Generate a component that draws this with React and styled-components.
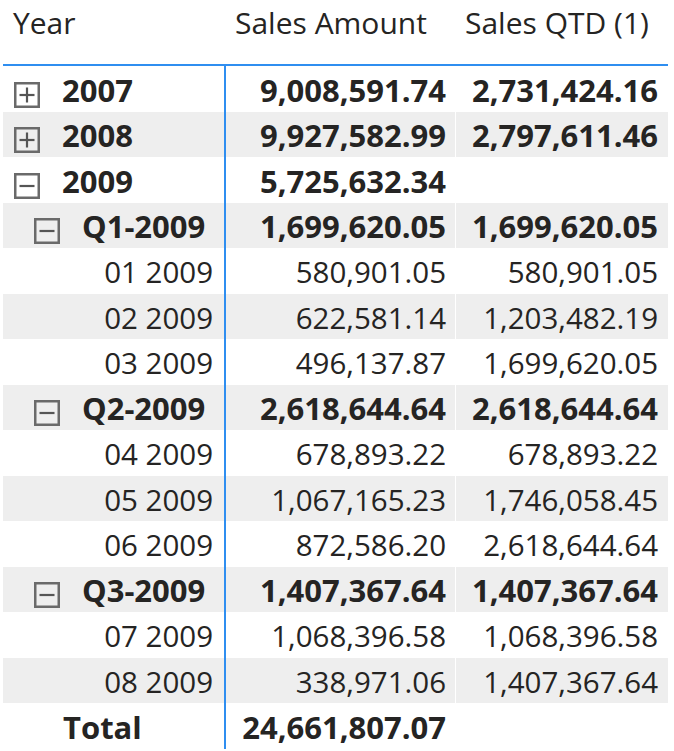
import React from "react";
import styled, { createGlobalStyle } from "styled-components";

const GlobalStyle = createGlobalStyle`
  html, body { margin: 0; padding: 0; background: #ffffff; }
  body { font-family: "Open Sans", "Noto Sans", sans-serif; color: #252423; }
`;

const BLUE = "#2f8ef0";
const COLS = "221px 231px 213px";

const Page = styled.div`
  padding-left: 3px;
  width: 665px;
`;

const HeaderRow = styled.div`
  display: grid;
  grid-template-columns: ${COLS};
  height: 64px;
  border-bottom: 2px solid ${BLUE};
`;

const HeaderCell = styled.div`
  font-size: 30px;
  font-weight: 400;
  line-height: 45px;
  padding-left: ${(p) => p.$pad}px;
  white-space: nowrap;
`;

const Row = styled.div`
  display: grid;
  grid-template-columns: ${COLS};
  height: 45.5px;
  background: ${(p) => (p.$shaded ? "#eeeeee" : "#ffffff")};
  font-size: ${(p) => (p.$bold ? 31 : 29.5)}px;
  font-weight: ${(p) => (p.$bold ? 700 : 400)};
`;

const LabelCell = styled.div`
  display: flex;
  align-items: center;
  justify-content: ${(p) => (p.$right ? "flex-end" : "flex-start")};
  padding: 2px 11px 0 ${(p) => p.$indent}px;
  white-space: nowrap;
`;

const NumCell = styled.div`
  display: flex;
  align-items: center;
  justify-content: flex-end;
  padding: 2px ${(p) => p.$padRight}px 0 0;
  border-left: ${(p) => p.$divider};
  white-space: nowrap;
`;

const Text = styled.span`
  line-height: normal;
`;

const ToggleBox = styled.svg`
  flex: none;
  width: 26px;
  height: 26px;
  margin-top: 10px;
  margin-right: 22px;
`;

function Toggle({ expanded }) {
  return (
    <ToggleBox viewBox="0 0 26 26">
      <rect x="1.25" y="1.25" width="23.5" height="23.5" fill="none" stroke="#6a6a6a" strokeWidth="2.5" />
      <line x1="5.5" y1="13" x2="20.5" y2="13" stroke="#555555" strokeWidth="2.2" />
      {!expanded && <line x1="13" y1="5.5" x2="13" y2="20.5" stroke="#555555" strokeWidth="2.2" />}
    </ToggleBox>
  );
}

const rows = [
  { label: "2007", level: 0, toggle: "collapsed", a: "9,008,591.74", b: "2,731,424.16", bold: true },
  { label: "2008", level: 0, toggle: "collapsed", a: "9,927,582.99", b: "2,797,611.46", bold: true },
  { label: "2009", level: 0, toggle: "expanded", a: "5,725,632.34", b: "", bold: true },
  { label: "Q1-2009", level: 1, toggle: "expanded", a: "1,699,620.05", b: "1,699,620.05", bold: true },
  { label: "01 2009", month: true, a: "580,901.05", b: "580,901.05" },
  { label: "02 2009", month: true, a: "622,581.14", b: "1,203,482.19" },
  { label: "03 2009", month: true, a: "496,137.87", b: "1,699,620.05" },
  { label: "Q2-2009", level: 1, toggle: "expanded", a: "2,618,644.64", b: "2,618,644.64", bold: true },
  { label: "04 2009", month: true, a: "678,893.22", b: "678,893.22" },
  { label: "05 2009", month: true, a: "1,067,165.23", b: "1,746,058.45" },
  { label: "06 2009", month: true, a: "872,586.20", b: "2,618,644.64" },
  { label: "Q3-2009", level: 1, toggle: "expanded", a: "1,407,367.64", b: "1,407,367.64", bold: true },
  { label: "07 2009", month: true, a: "1,068,396.58", b: "1,068,396.58" },
  { label: "08 2009", month: true, a: "338,971.06", b: "1,407,367.64" },
];

export default function App() {
  return (
    <Page>
      <GlobalStyle />
      <HeaderRow>
        <HeaderCell $pad={10}>Year</HeaderCell>
        <HeaderCell $pad={11}>Sales Amount</HeaderCell>
        <HeaderCell $pad={10}>Sales QTD (1)</HeaderCell>
      </HeaderRow>
      {rows.map((r, i) => (
        <Row key={r.label} $shaded={i % 2 === 1} $bold={r.bold}>
          <LabelCell $indent={11 + (r.level || 0) * 20} $right={r.month}>
            {r.toggle && <Toggle expanded={r.toggle === "expanded"} />}
            <Text>{r.label}</Text>
          </LabelCell>
          <NumCell $padRight={9} $divider={`2px solid ${BLUE}`}>
            <Text>{r.a}</Text>
          </NumCell>
          <NumCell $padRight={10} $divider="1px solid #ffffff">
            <Text>{r.b}</Text>
          </NumCell>
        </Row>
      ))}
      <Row $bold>
        <LabelCell $indent={60}>
          <Text>Total</Text>
        </LabelCell>
        <NumCell $padRight={9} $divider={`2px solid ${BLUE}`}>
          <Text>24,661,807.07</Text>
        </NumCell>
        <NumCell $padRight={10} $divider="1px solid #ffffff">
          <Text></Text>
        </NumCell>
      </Row>
    </Page>
  );
}
